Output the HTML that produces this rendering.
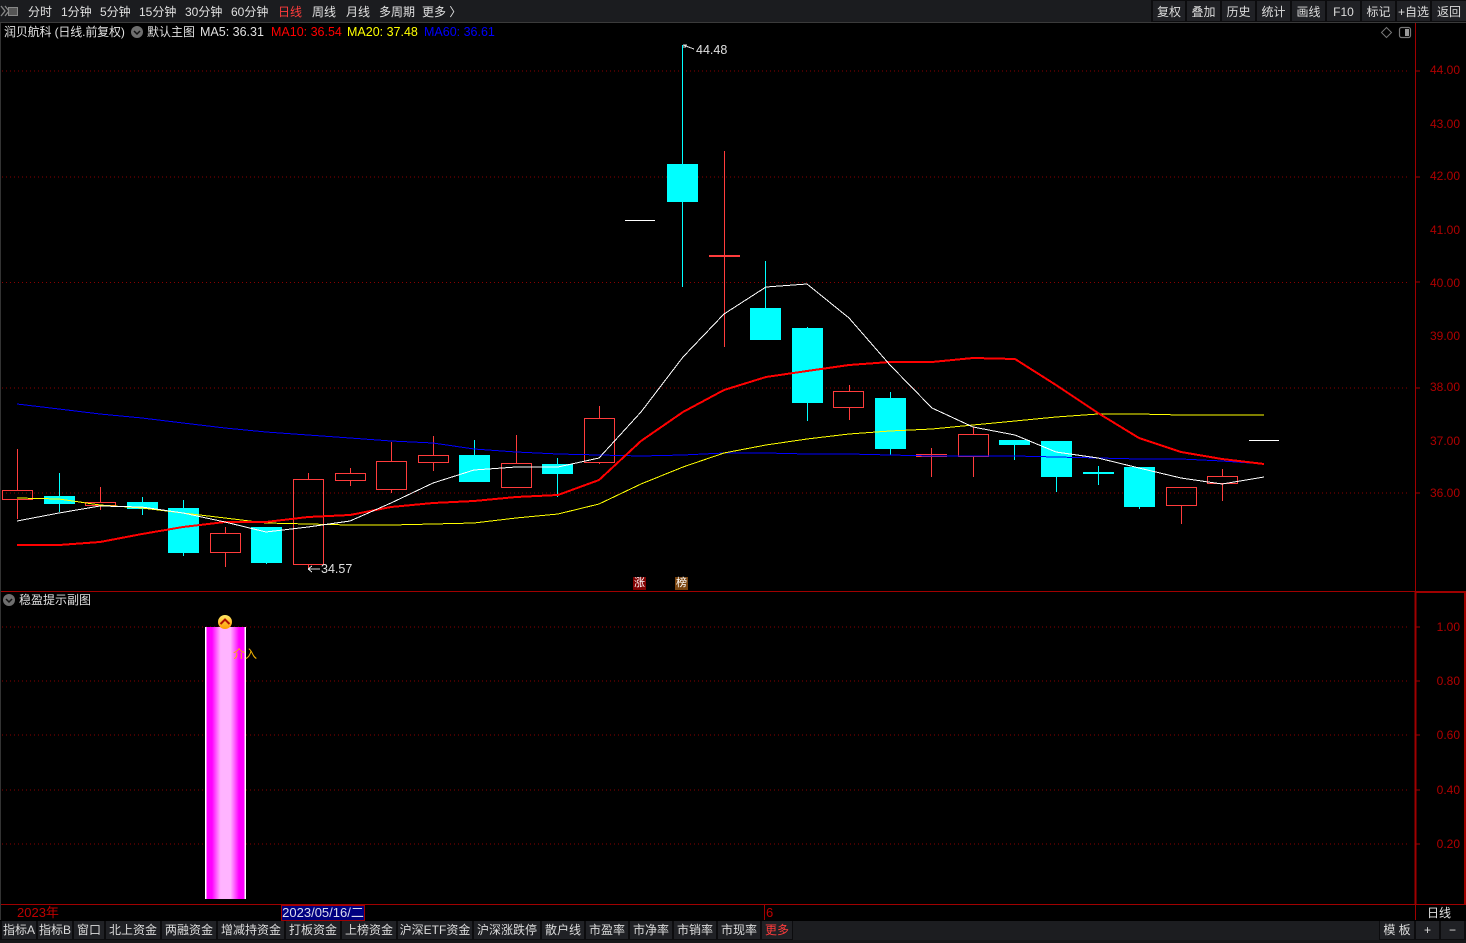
<!DOCTYPE html>
<html><head><meta charset="utf-8"><style>
html,body{margin:0;padding:0;background:#000;width:1466px;height:943px;overflow:hidden}
body{position:relative;font:12px/16px "Liberation Sans","Noto Sans CJK SC",sans-serif;color:#e0e0e0}
.t{position:absolute;white-space:nowrap;line-height:16px}
.b{position:absolute;background:#202125;text-align:center;white-space:nowrap;color:#dcdcdc;top:921px;height:18px;line-height:18px}
.r{position:absolute;background:#202125;text-align:center;white-space:nowrap;color:#dcdcdc;top:1px;height:20px;line-height:22px}
.ax{position:absolute;left:1420px;width:40px;text-align:right;color:#b00000;line-height:14px}
svg{position:absolute;left:0;top:0}
</style></head><body>
<div style="position:absolute;left:0;top:0;width:1466px;height:22px;background:#1b1c1f;border-bottom:1px solid #3a3a3a"></div>
<div style="position:absolute;left:1151px;top:0;width:315px;height:22px;background:#0c0c0e"></div>
<svg width="1466" height="943" shape-rendering="crispEdges">
<g stroke="#8a0000" stroke-width="1" stroke-dasharray="1 3">
<path d="M2 71H1410M2 177H1410M2 282.500H1410M2 388H1410M2 493H1410M2 627H1410M2 681H1410M2 735H1410M2 790H1410M2 844H1410"/>
</g>
<g stroke="#a00000" stroke-width="1">
<path d="M1415.500 23V591M0 591.500H1415M0 904.500H1466M1415.500 905V920M764.500 905V920"/>
<path d="M1415 71H1420M1415 177H1420M1415 282H1420M1415 388H1420M1415 493H1420M1415 627H1420M1415 681H1420M1415 735H1420M1415 790H1420M1415 844H1420"/>
</g>
<path d="M1415.500 592V905M1415 592H1466M1465 592V905" stroke="#a00000" stroke-width="2" fill="none"/>
<path d="M0.500 23V920" stroke="#333" stroke-width="1"/>
<!-- candles -->
<g stroke="#ff3c3c" stroke-width="1" fill="none">
<path d="M17.500 449V490M17.500 499V519M100.500 487V502M100.500 505V510M225.500 527V533M225.500 552V567M308.500 473V479M308.500 564V569M350.500 468V473M350.500 480V486M391.500 442V461M391.500 489V493M433.500 436V455M433.500 462V471M516.500 435V463M516.500 487V488M599.500 406V418M599.500 462V464M724.500 151V347M849.500 385V391M849.500 407V420M931.500 448V477M973.500 427V434M973.500 456V477M1181.500 505V524M1222.500 469V476M1222.500 483V501"/>
<rect x="2.500" y="490.500" width="30" height="9"/>
<rect x="85.500" y="502.500" width="30" height="3"/>
<rect x="210.500" y="533.500" width="30" height="19"/>
<rect x="293.500" y="479.500" width="30" height="85"/>
<rect x="335.500" y="473.500" width="30" height="7"/>
<rect x="376.500" y="461.500" width="30" height="28"/>
<rect x="418.500" y="455.500" width="30" height="7"/>
<rect x="501.500" y="463.500" width="30" height="24"/>
<rect x="584.500" y="418.500" width="30" height="44"/>
<rect x="833.500" y="391.500" width="30" height="16"/>
<rect x="958.500" y="434.500" width="30" height="22"/>
<rect x="1166.500" y="487.500" width="30" height="18"/>
<rect x="1207.500" y="476.500" width="30" height="7"/>
</g>
<g fill="#ff3c3c">
<rect x="709" y="255" width="31" height="2"/>
<rect x="916" y="454" width="31" height="1"/>
<rect x="916" y="456" width="31" height="1"/>
</g>
<g stroke="#00ffff" stroke-width="1" fill="none">
<path d="M59.500 473V512M142.500 497V515M183.500 500V556M266.500 527V564M474.500 440V482M557.500 458V497M682.500 45V287M765.500 261V308M807.500 327V421M890.500 392V455M1014.500 440V460M1056.500 441V492M1098.500 466V485M1139.500 467V509" />
</g>
<g fill="#00ffff">
<rect x="44" y="496" width="31" height="8"/>
<rect x="127" y="502" width="31" height="7"/>
<rect x="168" y="508" width="31" height="45"/>
<rect x="251" y="527" width="31" height="36"/>
<rect x="459" y="455" width="31" height="27"/>
<rect x="542" y="464" width="31" height="10"/>
<rect x="667" y="164" width="31" height="38"/>
<rect x="750" y="308" width="31" height="32"/>
<rect x="792" y="328" width="31" height="75"/>
<rect x="875" y="398" width="31" height="51"/>
<rect x="999" y="440" width="31" height="5"/>
<rect x="1041" y="441" width="31" height="36"/>
<rect x="1083" y="472" width="31" height="2"/>
<rect x="1124" y="467" width="31" height="40"/>
</g>
<rect x="625" y="220" width="30" height="1" fill="#fff"/>
<rect x="1249" y="440" width="30" height="1" fill="#fff"/>
<!-- MAs -->
<g fill="none">
<polyline stroke="#0000ff" stroke-width="1" points="17,404 59,409 100,414 142,418 183,423 225,428 266,432 308,435 350,438 391,441 433,443 474,449 516,452 558,454 599,455 641,456 683,455 724,453 766,453 807,454 849,454 890,455 932,456 973,456 1015,456 1056,457 1098,458 1139,459 1181,459 1222,461 1264,464"/>
<polyline stroke="#ffff00" stroke-width="1" points="17,498 59,499 100,505 142,508 183,513 225,518 266,523 308,524 350,525 391,525 433,524 474,523 516,518 558,514 599,504 641,484 683,467 724,453 766,445 807,439 849,434 890,431 932,429 973,425 1015,421 1056,417 1098,414 1139,414 1181,415 1222,415 1264,415"/>
<polyline stroke="#ff0000" stroke-width="2" points="17,545 59,545 100,542 142,534 183,527 225,522 266,522 308,517 350,515 391,507 433,503 474,501 516,497 558,495 599,480 641,441 683,412 724,390 766,377 807,371 849,365 890,362 932,362 973,358 1015,359 1056,385 1098,413 1139,438 1181,452 1222,459 1264,464"/>
<polyline stroke="#ffffff" stroke-width="1" points="17,521 59,513 100,506 142,507 183,513 225,522 266,532 308,527 350,521 391,503 433,483 474,470 516,467 558,467 599,458 641,412 683,357 724,314 766,287 807,284 849,318 890,365 932,408 973,427 1015,435 1056,452 1098,458 1139,468 1181,478 1222,484 1264,477"/>
<path d="M683 45L694 49M683 45H687M683 47H686M308 569H320M308 569L312 566M308 569L312 572" stroke="#ddd" stroke-width="1"/>
</g>
<g fill="none" shape-rendering="auto">
<!-- diamond, panel icon -->
<path d="M1386.500 27.500L1391.500 32.500L1386.500 37.500L1381.500 32.500Z" stroke="#777" stroke-width="1"/>
<rect x="1399.500" y="27.500" width="11" height="10" rx="2" stroke="#777" stroke-width="1.200"/>
<rect x="1405" y="29" width="4" height="7" fill="#999"/>
<!-- grey circles -->
<circle cx="137" cy="32" r="6" fill="#6e6e6e"/><path d="M134 31L137 34L140 31" stroke="#111" stroke-width="1.500"/>
<circle cx="9" cy="600" r="6" fill="#6e6e6e"/><path d="M6 599L9 602L12 599" stroke="#111" stroke-width="1.500"/>
<!-- top left icon -->
<path d="M1 6L5 11L1 16M5 6L9 11L5 16" stroke="#888" stroke-width="1.300"/>
<rect x="8.500" y="7.500" width="9" height="8" fill="#555" stroke="#888"/>
</g>
<defs>
<linearGradient id="pk" x1="0" x2="1" y1="0" y2="0">
<stop offset="0" stop-color="#fff"/><stop offset=".03" stop-color="#fff"/><stop offset=".04" stop-color="#f0f"/><stop offset=".17" stop-color="#f0f"/><stop offset=".38" stop-color="#ffb4ff"/><stop offset=".62" stop-color="#ffb4ff"/><stop offset=".83" stop-color="#f0f"/><stop offset=".96" stop-color="#f0f"/><stop offset=".97" stop-color="#fff"/><stop offset="1" stop-color="#fff"/>
</linearGradient>
<linearGradient id="yo" x1="0" x2="0" y1="0" y2="1"><stop offset="0" stop-color="#ffe866"/><stop offset="1" stop-color="#ff9a00"/></linearGradient>
</defs>
<rect x="205" y="627" width="41" height="272" fill="url(#pk)"/>
<g shape-rendering="auto"><circle cx="225" cy="622" r="7" fill="url(#yo)"/><path d="M220.500 624L225 619.500L229.500 624" stroke="#b01000" stroke-width="2" fill="none"/></g>
</svg>
<!-- top bar -->
<span class="t" style="left:28px;top:4px">分时</span>
<span class="t" style="left:61px;top:4px">1分钟</span>
<span class="t" style="left:100px;top:4px">5分钟</span>
<span class="t" style="left:139px;top:4px">15分钟</span>
<span class="t" style="left:185px;top:4px">30分钟</span>
<span class="t" style="left:231px;top:4px">60分钟</span>
<span class="t" style="left:278px;top:4px;color:#ff3c3c">日线</span>
<span class="t" style="left:312px;top:4px">周线</span>
<span class="t" style="left:346px;top:4px">月线</span>
<span class="t" style="left:379px;top:4px">多周期</span>
<span class="t" style="left:422px;top:4px">更多 〉</span>
<div class="r" style="left:1153px;width:32px">复权</div>
<div class="r" style="left:1187px;width:33px">叠加</div>
<div class="r" style="left:1222px;width:33px">历史</div>
<div class="r" style="left:1257px;width:33px">统计</div>
<div class="r" style="left:1292px;width:33px">画线</div>
<div class="r" style="left:1327px;width:33px">F10</div>
<div class="r" style="left:1362px;width:33px">标记</div>
<div class="r" style="left:1397px;width:33px">+自选</div>
<div class="r" style="left:1432px;width:34px">返回</div>
<!-- header -->
<span class="t" style="left:4px;top:24px;letter-spacing:-.15px">润贝航科 (日线.前复权)</span>
<span class="t" style="left:147px;top:24px">默认主图</span>
<span class="t" style="left:200px;top:24px;font-size:12.500px">MA5: 36.31</span>
<span class="t" style="left:271px;top:24px;font-size:12.500px;color:#f00">MA10: 36.54</span>
<span class="t" style="left:347px;top:24px;font-size:12.500px;color:#ff0">MA20: 37.48</span>
<span class="t" style="left:424px;top:24px;font-size:12.500px;color:#00f">MA60: 36.61</span>
<span class="t" style="left:696px;top:42px;font-size:12.500px">44.48</span>
<span class="t" style="left:321px;top:561px;font-size:12.500px">34.57</span>
<span class="t" style="left:19px;top:592px">稳盈提示副图</span>
<span class="t" style="left:233px;top:646px;color:#f5b400">介入</span>
<div style="position:absolute;left:633px;top:577px;width:13px;height:13px;background:#800000;color:#fff;font-size:11px;line-height:13px;text-align:center">涨</div>
<div style="position:absolute;left:675px;top:577px;width:13px;height:13px;background:#7a4510;color:#fff;font-size:11px;line-height:13px;text-align:center">榜</div>
<!-- axis -->
<div class="ax" style="top:63px">44.00</div><div class="ax" style="top:117px">43.00</div><div class="ax" style="top:169px">42.00</div><div class="ax" style="top:223px">41.00</div><div class="ax" style="top:276px">40.00</div><div class="ax" style="top:329px">39.00</div><div class="ax" style="top:380px">38.00</div><div class="ax" style="top:434px">37.00</div><div class="ax" style="top:486px">36.00</div>
<div class="ax" style="top:620px">1.00</div><div class="ax" style="top:674px">0.80</div><div class="ax" style="top:728px">0.60</div><div class="ax" style="top:783px">0.40</div><div class="ax" style="top:837px">0.20</div>
<!-- date row -->
<span class="t" style="left:17px;top:905px;color:#c00000;font-size:13px">2023年</span>
<div style="position:absolute;left:281px;top:905px;width:82px;height:14px;background:#000080;border:1px solid #a00000;color:#dde;font-size:13px;line-height:14px;text-align:center;white-space:nowrap">2023/05/16/二</div>
<span class="t" style="left:766px;top:905px;color:#c00000;font-size:13px">6</span>
<span class="t" style="left:1427px;top:905px">日线</span>
<!-- bottom tabs -->
<div style="position:absolute;left:0;top:921px;width:1466px;height:19px;background:#1c1d20"></div>
<div style="position:absolute;left:0;top:921px;width:793px;height:19px;background:#0c0c0e"></div>
<div style="position:absolute;left:1379px;top:921px;width:87px;height:19px;background:#0c0c0e"></div>
<div style="position:absolute;left:0;top:940px;width:1466px;height:3px;background:#17181a"></div>
<div class="b" style="left:2px;width:34px">指标A</div>
<div class="b" style="left:38px;width:34px">指标B</div>
<div class="b" style="left:74px;width:30px">窗口</div>
<div class="b" style="left:106px;width:54px">北上资金</div>
<div class="b" style="left:162px;width:54px">两融资金</div>
<div class="b" style="left:218px;width:66px">增减持资金</div>
<div class="b" style="left:286px;width:54px">打板资金</div>
<div class="b" style="left:342px;width:54px">上榜资金</div>
<div class="b" style="left:398px;width:74px">沪深ETF资金</div>
<div class="b" style="left:474px;width:66px">沪深涨跌停</div>
<div class="b" style="left:542px;width:42px">散户线</div>
<div class="b" style="left:586px;width:42px">市盈率</div>
<div class="b" style="left:630px;width:42px">市净率</div>
<div class="b" style="left:674px;width:42px">市销率</div>
<div class="b" style="left:718px;width:42px">市现率</div>
<div class="b" style="left:762px;width:30px;color:#ff3c3c">更多</div>
<div class="b" style="left:1380px;width:34px">模 板</div>
<div class="b" style="left:1416px;width:23px">+</div>
<div class="b" style="left:1441px;width:23px">−</div>
</body></html>
